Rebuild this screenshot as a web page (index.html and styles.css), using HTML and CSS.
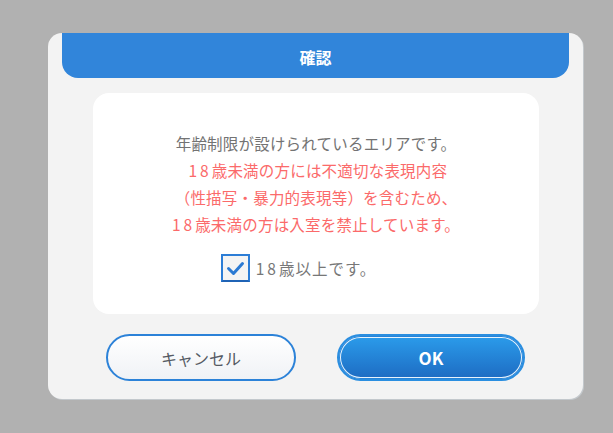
FILE: index.html
```html
<!DOCTYPE html>
<html lang="ja">
<head>
    <meta charset="UTF-8">
    <meta name="viewport" content="width=device-width, initial-scale=1.0">
    <title>確認</title>
    <link rel="stylesheet" href="styles.css">
</head>
<body>
    <div class="dialog">
        <div class="dialog-header">確認</div>

        <div class="dialog-body">
            <p class="notice">年齢制限が設けられているエリアです。</p>
            <p class="warning">&nbsp;<span class="num">18</span>歳未満の方には不適切な表現内容</p>
            <p class="warning">（性描写・暴力的表現等）を含むため、</p>
            <p class="warning"><span class="num">18</span>歳未満の方は入室を禁止しています。</p>

            <label class="age-check">
                <span class="checkbox">
                    <svg width="21" height="21" viewBox="0 0 21 21">
                        <path d="M3.5 10.5 L8.5 15.5 L17.5 5.5" fill="none" stroke="#2b7ad3" stroke-width="3" stroke-linecap="round" stroke-linejoin="round"/>
                    </svg>
                </span>
                <span><span class="num">18</span>歳以上です。</span>
            </label>
        </div>

        <div class="dialog-buttons">
            <button class="btn btn-cancel">キャンセル</button>
            <button class="btn btn-ok">OK</button>
        </div>
    </div>
</body>
</html>
```

FILE: styles.css
```css
body {
    margin: 0;
    padding: 33px 0 0 48px;
    height: 433px;
    box-sizing: border-box;
    background-color: #b1b1b1;
    font-family: "Noto Sans CJK JP", "Noto Sans", sans-serif;
}

.dialog {
    width: 535px;
    height: 366px;
    background-color: #f3f3f3;
    border-radius: 14px;
    box-shadow: 1px 1px 0 #c3c8cc;
    display: flex;
    flex-direction: column;
}

.dialog-header {
    margin: 0 14px;
    height: 45px;
    background-color: #3185da;
    border-radius: 0 0 16px 16px;
    color: #fff;
    font-size: 16px;
    font-weight: bold;
    display: flex;
    justify-content: center;
    align-items: center;
    padding-top: 3px;
    box-sizing: border-box;
}

.dialog-body {
    margin: 15px 44px 0 45px;
    height: 221px;
    box-sizing: border-box;
    background-color: #fff;
    border-radius: 16px;
    padding-top: 37px;
    display: flex;
    flex-direction: column;
    align-items: center;
}

.dialog-body p {
    margin: 0;
    font-size: 15.5px;
    letter-spacing: 0.2px;
    line-height: 27px;
    text-align: center;
}

.num {
    letter-spacing: 3px;
}

.notice {
    color: #737373;
}

.warning {
    color: #fb6a6a;
}

.age-check {
    margin: 16px 35px 0 0;
    display: flex;
    align-items: center;
    gap: 6px;
    color: #777;
    font-size: 15.5px;
    letter-spacing: 1px;
}

.checkbox {
    width: 29px;
    height: 28px;
    box-sizing: border-box;
    border: 2px solid #2c7dd6;
    border-bottom-color: #1f63b5;
    background-color: #f4f4f4;
    display: flex;
    justify-content: center;
    align-items: center;
}

.dialog-buttons {
    margin-top: 20px;
    display: flex;
    justify-content: center;
    gap: 41px;
}

.btn {
    width: 190px;
    height: 47px;
    border-radius: 24px;
    font-family: "Noto Sans CJK JP", "Noto Sans", sans-serif;
    font-size: 16px;
    cursor: pointer;
}

.btn-cancel {
    border: 2px solid #2c82d8;
    background: linear-gradient(#ffffff, #f0f2f6);
    color: #555a63;
}

.btn-ok {
    width: 188px;
    border: 2px solid #2a8ee0;
    background: linear-gradient(#2b9ceb, #1d6bc2);
    box-shadow: inset 0 0 0 1px #2683d8, inset 0 0 0 2px #e8f3fc;
    color: #fff;
    font-size: 17px;
    font-weight: bold;
}
```
